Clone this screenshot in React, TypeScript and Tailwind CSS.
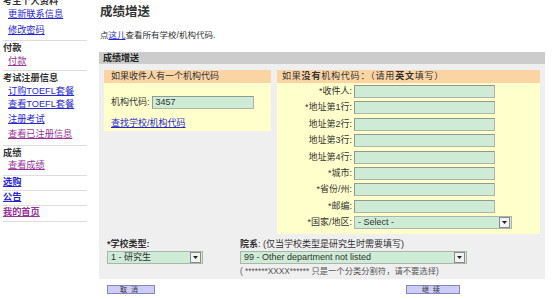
import React from "react";

const F = { fontFamily: '"Liberation Sans", "Noto Sans CJK SC", sans-serif' };

function Arrow() {
  return (
    <span className="flex h-[11px] w-[11px] items-center justify-center border border-[#8a8a8a] bg-[#f2f2f2]">
      <svg width="5" height="3" viewBox="0 0 5 3"><path d="M0 0h5L2.5 3z" fill="#222" /></svg>
    </span>
  );
}

function Input({ w = "w-[141px]", value = "" }: { w?: string; value?: string }) {
  return (
    <div className={`${w} h-[13px] border border-[#a9b5ad] border-t-[#8f9a92] border-l-[#8f9a92] bg-[#cdebd5] text-[9px] leading-[11px] pl-[3px] text-[#333]`}>{value}</div>
  );
}

function Select({ w, text }: { w: string; text: string }) {
  return (
    <div className={`${w} h-[13px] flex items-center border border-[#a9b5ad] bg-[#cdebd5] pl-[3px] pr-[1px]`}>
      <span className="flex-1 text-[9px] leading-[11px] text-[#333] whitespace-nowrap overflow-hidden">{text}</span>
      <Arrow />
    </div>
  );
}

const Div = ({ mt }: { mt: string }) => <div className={`h-px bg-[#dddddd] w-[84px] ${mt}`} />;

export default function App() {
  const rows: [string, boolean][] = [
    ["*收件人:", false],
    ["*地址第1行:", false],
    ["地址第2行:", false],
    ["地址第3行:", false],
    ["地址第4行:", false],
    ["*城市:", false],
    ["*省份/州:", false],
    ["*邮编:", false],
    ["*国家/地区:", true],
  ];
  const blue = "text-[#2727d8] underline";
  const purple = "text-[#993399] underline";
  return (
    <div style={F} className="w-[554px] h-[299px] overflow-hidden bg-white flex text-[#333]">
      <aside className="w-[99px] shrink-0 pl-[3px] text-[9.2px] leading-[12px]">
        <div className="h-[12px] -mt-[5px] font-bold">考生个人资料</div>
        <div className={`h-[12px] mt-[1px] pl-[5px] ${blue}`}>更新联系信息</div>
        <div className={`h-[12px] mt-[4px] pl-[5px] ${blue}`}>修改密码</div>
        <Div mt="mt-[4px]" />
        <div className="h-[12px] mt-[1px] font-bold">付款</div>
        <div className={`h-[12px] mt-[1px] pl-[5px] ${purple}`}>付款</div>
        <Div mt="mt-[3px]" />
        <div className="h-[12px] mt-[1px] font-bold">考试注册信息</div>
        <div className={`h-[12px] mt-[1px] pl-[5px] ${blue}`}>订购TOEFL套餐</div>
        <div className={`h-[12px] mt-[1px] pl-[5px] ${blue}`}>查看TOEFL套餐</div>
        <div className={`h-[12px] mt-[3px] pl-[5px] ${blue}`}>注册考试</div>
        <div className={`h-[12px] mt-[3px] pl-[5px] ${purple}`}>查看已注册信息</div>
        <Div mt="mt-[5px]" />
        <div className="h-[12px] mt-[1px] font-bold">成绩</div>
        <div className={`h-[12px] pl-[5px] ${purple}`}>查看成绩</div>
        <Div mt="mt-[4px]" />
        <div className={`h-[12px] font-bold ${blue}`}>选购</div>
        <Div mt="mt-[2px]" />
        <div className={`h-[12px] font-bold ${blue}`}>公告</div>
        <Div mt="mt-[2px]" />
        <div className={`h-[12px] font-bold ${purple}`}>我的首页</div>
        <Div mt="mt-[3px]" />
      </aside>
      <main className="w-[446px] shrink-0">
        <h1 className="mt-[4px] pl-[1px] text-[12.5px] leading-[16px] font-bold text-[#333]">成绩增送</h1>
        <p className="mt-[9px] pl-[1px] text-[8.5px] leading-[12px]">
          点<span className={blue}>这儿</span>查看所有学校/机构代码.
        </p>
        <div className="mt-[11px] bg-[#efefef] pb-[2px]">
          <div className="h-[12px] bg-[#cccccc] pl-[4px] text-[9px] leading-[12px] font-bold text-[#222]">成绩增送</div>
          <div className="flex gap-[6px] px-[5px] pt-[6px]">
            <div className="w-[167px] self-start">
              <div className="h-[13px] bg-[#fbd4a4] pl-[7px] text-[9px] leading-[13px]">如果收件人有一个机构代码</div>
              <div className="bg-[#ffffcc] h-[48px] pl-[7px] pt-[13px]">
                <div className="flex items-center gap-[2px] text-[9px]">
                  <span>机构代码:</span>
                  <Input w="w-[102px]" value="3457" />
                </div>
                <div className={`mt-[8px] text-[9px] leading-[11px] ${blue}`}>查找学校/机构代码</div>
              </div>
            </div>
            <div className="flex-1">
              <div className="h-[13px] bg-[#fbd4a4] pl-[5px] text-[9px] leading-[13px] tracking-[0.8px] whitespace-nowrap">
                如果<b>没有</b>机构代码：（请用<b>英文</b>填写）
              </div>
              <div className="bg-[#ffffcc] pt-[2px] pb-[5px] flex flex-col gap-[3.4px]">
                {rows.map(([l, sel]) => (
                  <div key={l} className="flex items-center h-[13px]">
                    <span className="w-[77px] text-right pr-[2px] text-[9px] leading-[11px] whitespace-nowrap">{l}</span>
                    {sel ? <Select w="w-[158px]" text="- Select -" /> : <Input />}
                  </div>
                ))}
              </div>
            </div>
          </div>
          <div className="flex px-[8px] mt-[4px]">
            <div className="w-[133px]">
              <div className="text-[9px] leading-[12px] font-bold">*学校类型:</div>
              <div className="mt-[1px]"><Select w="w-[96px]" text="1 - 研究生" /></div>
            </div>
            <div>
              <div className="text-[9px] leading-[12px]"><b>院系</b>: (仅当学校类型是研究生时需要填写)</div>
              <div className="mt-[1px]"><Select w="w-[227px]" text="99 - Other department not listed" /></div>
              <div className="mt-[1px] text-[8.3px] leading-[12px] text-[#555] whitespace-nowrap">( *******XXXX****** 只是一个分类分割符，请不要选择)</div>
            </div>
          </div>
        </div>
        <div className="flex mt-[6px] pl-[8px]">
          <button className="w-[48px] h-[9px] bg-[#ccccf7] border border-[#8585c0] text-[7px] leading-[7px] tracking-[4px] text-[#333] flex items-center justify-center">取消</button>
          <button className="ml-[251px] w-[54px] h-[9px] bg-[#ccccf7] border border-[#8585c0] text-[7px] leading-[7px] tracking-[4px] text-[#333] flex items-center justify-center">继续</button>
        </div>
      </main>
    </div>
  );
}
